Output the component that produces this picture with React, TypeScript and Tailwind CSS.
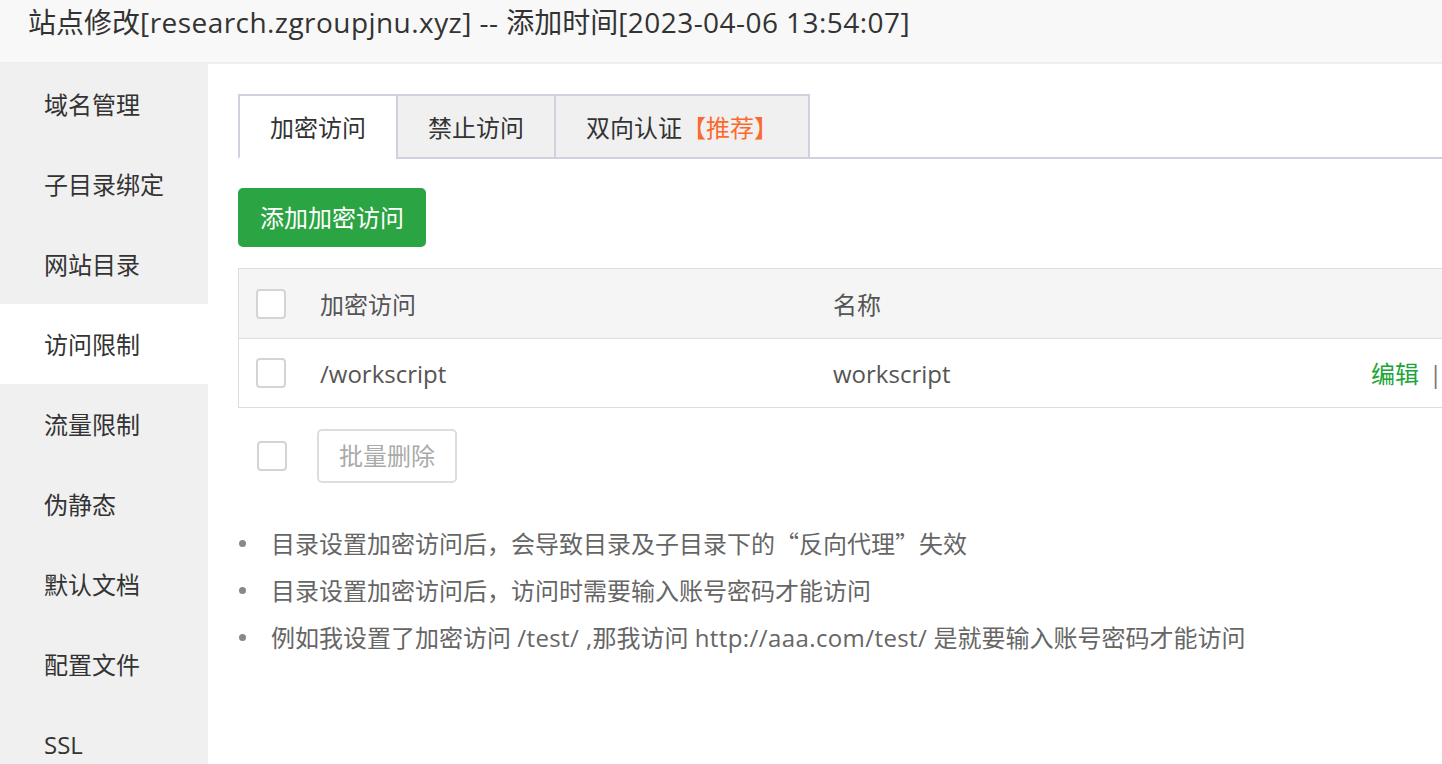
import { useState } from 'react'

const menu = ['域名管理', '子目录绑定', '网站目录', '访问限制', '流量限制', '伪静态', '默认文档', '配置文件', 'SSL']

const cjk = { fontFamily: '"Noto Sans CJK SC", sans-serif' }

function Box() {
  return <span className="block w-[30px] h-[30px] rounded-[4px] border-2 border-[#d4d4d4] bg-white" />
}

export default function App() {
  const [active] = useState(3)
  const [tab] = useState(0)

  const tips = [
    <>
      目录设置加密访问后，会导致目录及子目录下的<span style={cjk}>“</span>反向代理<span style={cjk}>”</span>失效
    </>,
    <>目录设置加密访问后，访问时需要输入账号密码才能访问</>,
    <>
      例如我设置了加密访问 <span className="tracking-[0.4px]">/test/ ,</span>那我访问{' '}
      <span className="tracking-[0.4px]">http://aaa.com/test/</span> 是就要输入账号密码才能访问
    </>,
  ]

  return (
    <div
      className="w-[1442px] h-[764px] overflow-hidden bg-white text-[#333]"
      style={{ fontFamily: '"Open Sans", "Noto Sans CJK SC", sans-serif' }}
    >
      <div className="h-[64px] bg-[#f8f8f8] border-b-2 border-[#eeeeee] pl-[28px] pt-[2px] text-[28px] leading-[40px] whitespace-nowrap">
        站点修改<span className="tracking-[0.45px]">[research.zgroupjnu.xyz] -- </span>添加时间
        <span className="tracking-[0.45px]">[2023-04-06 13:54:07]</span>
      </div>

      <div className="flex h-[700px]">
        <div className="w-[208px] shrink-0 bg-[#f0f0f0]">
          {menu.map((m, i) => (
            <div
              key={m}
              className={`h-[80px] flex items-center pl-[44px] pt-[2px] text-[24px] ${i === active ? 'bg-white' : ''}`}
            >
              {m}
            </div>
          ))}
        </div>

        <div className="flex-1 overflow-hidden pl-[30px] pt-[30px]">
          <div className="flex border-b-2 border-[#d2d0df] w-[1300px]">
            {['加密访问', '禁止访问', '双向认证'].map((t, i) => (
              <div
                key={t}
                className={`-mb-[2px] h-[65px] flex items-center px-[30px] pt-[2px] border-t-2 border-l-2 border-[#d2d0df] text-[24px] ${
                  i === 2 ? 'border-r-2' : ''
                } ${i === tab ? 'bg-white border-b-2 border-b-white' : 'bg-[#f0f0f0] border-b-2'}`}
              >
                {t}
                {i === 2 && <span className="text-[#fa6a2c]">【推荐】</span>}
              </div>
            ))}
          </div>

          <button className="mt-[29px] h-[59px] px-[22px] rounded-[5px] bg-[#2ba443] text-white text-[24px]">
            添加加密访问
          </button>

          <div className="mt-[21px] w-[1280px] border border-[#dddddd] text-[24px] text-[#555]">
            <div className="flex items-center h-[70px] bg-[#f5f5f5] border-b border-[#dddddd]">
              <div className="w-[81px] pl-[17px]">
                <Box />
              </div>
              <div className="w-[513px] pt-[2px]">加密访问</div>
              <div className="w-[538px] pt-[2px]">名称</div>
              <div className="flex-1" />
            </div>
            <div className="flex items-center h-[68px]">
              <div className="w-[81px] pl-[17px]">
                <Box />
              </div>
              <div className="w-[513px] pt-[2px]">/workscript</div>
              <div className="w-[538px] pt-[2px]">workscript</div>
              <div className="flex-1 whitespace-nowrap pt-[2px]">
                <span className="text-[#20a53a]">编辑</span>
                <span className="mx-[10px] text-[#777]">|</span>
                <span className="text-[#20a53a]">删除</span>
              </div>
            </div>
          </div>

          <div className="flex items-center mt-[21px]">
            <div className="pl-[19px] w-[79px]">
              <Box />
            </div>
            <button className="h-[54px] px-[20px] rounded-[5px] border-2 border-[#dddddd] text-[24px] text-[#aaaaaa] bg-white">
              批量删除
            </button>
          </div>

          <ul className="mt-[37px] text-[24px] text-[#666]">
            {tips.map((t, i) => (
              <li key={i} className="flex items-center h-[47px] whitespace-nowrap">
                <span className="ml-[1px] mr-[25px] w-[7px] h-[7px] rounded-full bg-[#888]" />
                <span>{t}</span>
              </li>
            ))}
          </ul>
        </div>
      </div>
    </div>
  )
}
